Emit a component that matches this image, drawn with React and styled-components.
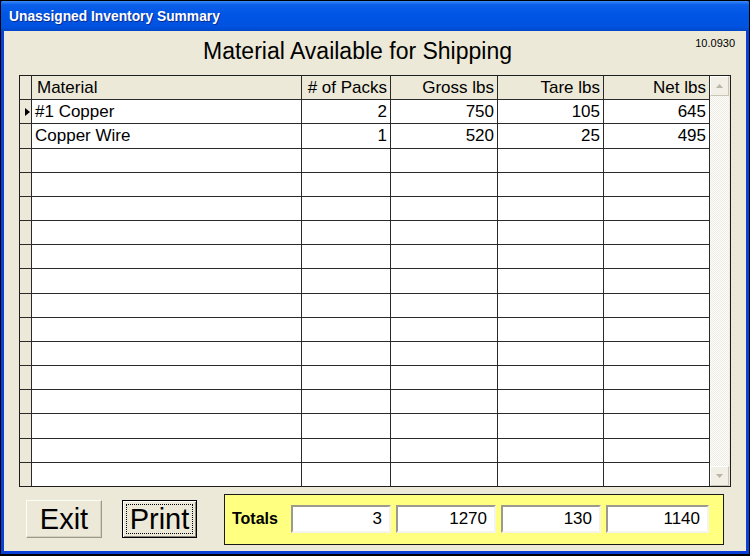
import React from "react";
import styled, { createGlobalStyle } from "styled-components";

const GlobalStyle = createGlobalStyle`
  body {
    margin: 0;
    background: #000;
    font-family: "Liberation Sans", Arial, sans-serif;
  }
`;

const columns = [
  { key: "material", label: "Material", width: 270, align: "left" },
  { key: "packs", label: "# of Packs", width: 89, align: "right" },
  { key: "gross", label: "Gross lbs", width: 107, align: "right" },
  { key: "tare", label: "Tare lbs", width: 106, align: "right" },
  { key: "net", label: "Net lbs", width: 106, align: "right" },
];

const rows = [
  { material: "#1 Copper", packs: 2, gross: 750, tare: 105, net: 645 },
  { material: "Copper Wire", packs: 1, gross: 520, tare: 25, net: 495 },
];

const TOTAL_ROWS = 16;

const UnassignedInventory = () => {
  const filled = [...rows];
  while (filled.length < TOTAL_ROWS) filled.push(null);

  const totals = ["packs", "gross", "tare", "net"].map((k) =>
    rows.reduce((sum, r) => sum + r[k], 0)
  );

  return (
    <Window>
      <TitleBar>
        <TitleText>Unassigned Inventory Summary</TitleText>
      </TitleBar>
      <Frame>
        <HeadingRow>
          <Heading>Material Available for Shipping</Heading>
          <Version>10.0930</Version>
        </HeadingRow>

        <Grid>
          <Table>
            <Row>
              <Selector />
              {columns.map((c) => (
                <Cell key={c.key} $width={c.width} $align={c.align} $header>
                  {c.label}
                </Cell>
              ))}
            </Row>
            {filled.map((r, i) => (
              <Row key={i} $last={i === filled.length - 1}>
                <Selector>
                  {i === 0 && (
                    <svg width="5" height="8" viewBox="0 0 5 8">
                      <path d="M0 0 L5 4 L0 8 Z" fill="#000" />
                    </svg>
                  )}
                </Selector>
                {columns.map((c) => (
                  <Cell key={c.key} $width={c.width} $align={c.align} $white>
                    {r ? r[c.key] : ""}
                  </Cell>
                ))}
              </Row>
            ))}
          </Table>
          <Scrollbar>
            <ScrollButton>
              <svg width="7" height="4" viewBox="0 0 7 4">
                <path d="M3.5 0 L7 4 L0 4 Z" fill="#B9B6A8" />
              </svg>
            </ScrollButton>
            <Track />
            <ScrollButton>
              <svg width="7" height="4" viewBox="0 0 7 4">
                <path d="M0 0 L7 0 L3.5 4 Z" fill="#B9B6A8" />
              </svg>
            </ScrollButton>
          </Scrollbar>
        </Grid>

        <BottomBar>
          <Button>Exit</Button>
          <Button $focused>Print</Button>
          <TotalsPanel>
            <TotalsLabel>Totals</TotalsLabel>
            {totals.map((t, i) => (
              <TotalBox key={i} $wide={i === 3}>
                {t}
              </TotalBox>
            ))}
          </TotalsPanel>
        </BottomBar>
      </Frame>
    </Window>
  );
};

export default function App() {
  return (
    <>
      <GlobalStyle />
      <UnassignedInventory />
    </>
  );
}

const Window = styled.div`
  width: 750px;
  height: 556px;
  box-sizing: border-box;
  border: 1px solid #000;
  border-bottom-width: 2px;
  display: flex;
  flex-direction: column;
  background: #0a3fd8;
`;

const TitleBar = styled.div`
  height: 30px;
  flex: none;
  display: flex;
  align-items: center;
  padding-left: 8px;
  background: linear-gradient(
    180deg,
    #3d8bf8 0%,
    #0b5fe9 12%,
    #0055e5 45%,
    #0053e0 85%,
    #0047c8 100%
  );
  border-radius: 2px 2px 0 0;
`;

const TitleText = styled.span`
  color: #fff;
  font-weight: bold;
  font-size: 13.8px;
  text-shadow: 1px 1px 0 #0a2a90;
  letter-spacing: 0;
`;

const Frame = styled.div`
  flex: 1;
  display: flex;
  flex-direction: column;
  background: #ece9d8;
  border: 3px solid #0a3fd8;
  border-top: none;
  border-right-width: 3px;
`;

const HeadingRow = styled.div`
  height: 44px;
  flex: none;
  box-sizing: border-box;
  display: flex;
  justify-content: space-between;
  align-items: flex-start;
  padding: 6px 11px 0 199px;
`;

const Heading = styled.div`
  font-size: 23px;
  line-height: 26px;
  margin-top: 1px;
  color: #000;
`;

const Version = styled.div`
  font-size: 11px;
  line-height: 13px;
  color: #000;
`;

const Grid = styled.div`
  height: 412px;
  flex: none;
  margin: 0 15px;
  box-sizing: border-box;
  border: 1px solid #1e1e1e;
  display: flex;
`;

const Table = styled.div`
  width: 690px;
  display: flex;
  flex-direction: column;
`;

const Row = styled.div`
  flex: 1;
  display: flex;
  border-bottom: ${(p) => (p.$last ? "none" : "1px solid #2a2a2a")};
`;

const Selector = styled.div`
  width: 12px;
  box-sizing: border-box;
  border-right: 1px solid #2a2a2a;
  background: #ece9d8;
  display: flex;
  align-items: center;
  justify-content: flex-end;
  padding-right: 1px;
`;

const Cell = styled.div`
  width: ${(p) => p.$width}px;
  box-sizing: border-box;
  border-right: 1px solid #2a2a2a;
  background: ${(p) => (p.$white ? "#fff" : "#ece9d8")};
  display: flex;
  align-items: center;
  justify-content: ${(p) => (p.$align === "right" ? "flex-end" : "flex-start")};
  padding: ${(p) =>
    p.$align === "right" ? "0 3px 0 0" : p.$header ? "0 0 0 5px" : "0 0 0 3px"};
  font-size: 17px;
  color: #000;
  white-space: nowrap;
  overflow: hidden;
`;

const Scrollbar = styled.div`
  width: 19px;
  display: flex;
  flex-direction: column;
`;

const ScrollButton = styled.div`
  height: 20px;
  flex: none;
  box-sizing: border-box;
  display: flex;
  align-items: center;
  justify-content: center;
  background: #f1efe6;
  border: 1px solid;
  border-color: #fdfdfa #c9c6b6 #c9c6b6 #fdfdfa;
`;

const Track = styled.div`
  flex: 1;
  background: repeating-conic-gradient(#fdfdfb 0 25%, #eeece2 0 50%) 0 0 / 2px
    2px;
`;

const BottomBar = styled.div`
  flex: 1;
  display: flex;
  align-items: center;
  padding-left: 22px;
`;

const Button = styled.button`
  width: ${(p) => (p.$focused ? 75 : 76)}px;
  height: 38px;
  margin-right: ${(p) => (p.$focused ? 27 : 20)}px;
  padding: 0;
  font-family: "Liberation Sans", Arial, sans-serif;
  font-size: 29px;
  color: #000;
  background: #ece9d8;
  border: 1px solid;
  border-color: ${(p) =>
    p.$focused ? "#000" : "#fcfcf9 #9d9a8b #9d9a8b #fcfcf9"};
  box-shadow: ${(p) =>
    p.$focused
      ? "inset 1px 1px 0 #fff, inset -1px -1px 0 #8a877a"
      : "inset -1px -1px 0 #d4d0c0"};
  outline: ${(p) => (p.$focused ? "1px dotted #000" : "none")};
  outline-offset: -5px;
  display: flex;
  align-items: center;
  justify-content: center;
`;

const TotalsPanel = styled.div`
  width: 500px;
  height: 51px;
  box-sizing: border-box;
  background: #ffff80;
  border: 1.5px solid #1a1a1a;
  display: flex;
  align-items: center;
  padding-left: 7px;
  gap: 5px;
`;

const TotalsLabel = styled.div`
  width: 54px;
  font-weight: bold;
  font-size: 16px;
  color: #000;
`;

const TotalBox = styled.div`
  width: ${(p) => (p.$wide ? 103 : 100)}px;
  height: 28px;
  box-sizing: border-box;
  background: #fff;
  border: 2px solid;
  border-color: #9c9a90 #f4f3ee #f4f3ee #9c9a90;
  display: flex;
  align-items: center;
  justify-content: flex-end;
  padding-right: 7px;
  font-size: 17px;
  color: #000;
`;
